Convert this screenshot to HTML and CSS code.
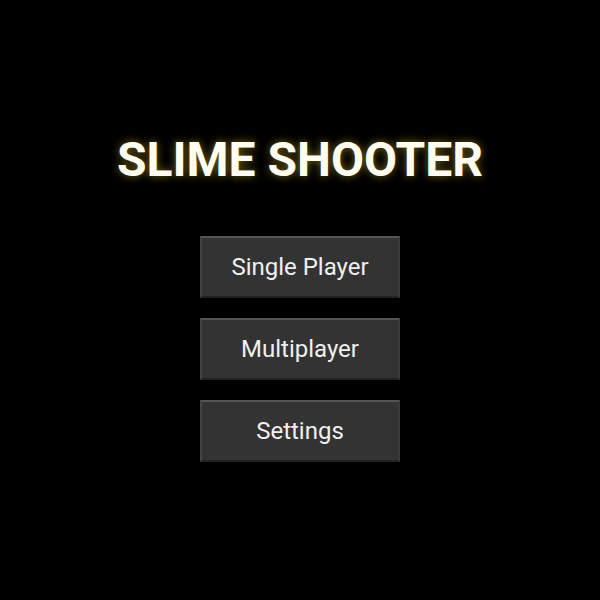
FILE: index.html
```html
<!DOCTYPE html>
<html>
<head>
<meta charset="utf-8">
<link rel="stylesheet" href="styles.css">
</head>
<body>
<div class="menu">
  <h1 class="title">SLIME SHOOTER</h1>
  <div class="buttons">
    <button class="btn">Single Player</button>
    <button class="btn">Multiplayer</button>
    <button class="btn">Settings</button>
  </div>
</div>
</body>
</html>
```
FILE: styles.css
```css
html, body {
  margin: 0;
  padding: 0;
  background: #000;
  width: 600px;
  height: 600px;
}
.menu {
  display: flex;
  flex-direction: column;
  align-items: center;
  padding-top: 136px;
  font-family: Roboto, "Liberation Sans", sans-serif;
}
.title {
  margin: 0;
  font-size: 48px;
  line-height: 48px;
  font-weight: 700;
  color: #fffdf2;
  text-shadow: 0 0 8px rgba(200, 170, 40, 0.6);
}
.buttons {
  margin-top: 52px;
  display: flex;
  flex-direction: column;
  gap: 20px;
}
.btn {
  width: 200px;
  height: 62px;
  box-sizing: border-box;
  background: #333;
  color: #f0f0f0;
  font-family: Roboto, "Liberation Sans", sans-serif;
  font-size: 24px;
  border: 2px solid;
  border-color: #555 #3a3a3a #222 #444;
  padding: 0;
}
```
